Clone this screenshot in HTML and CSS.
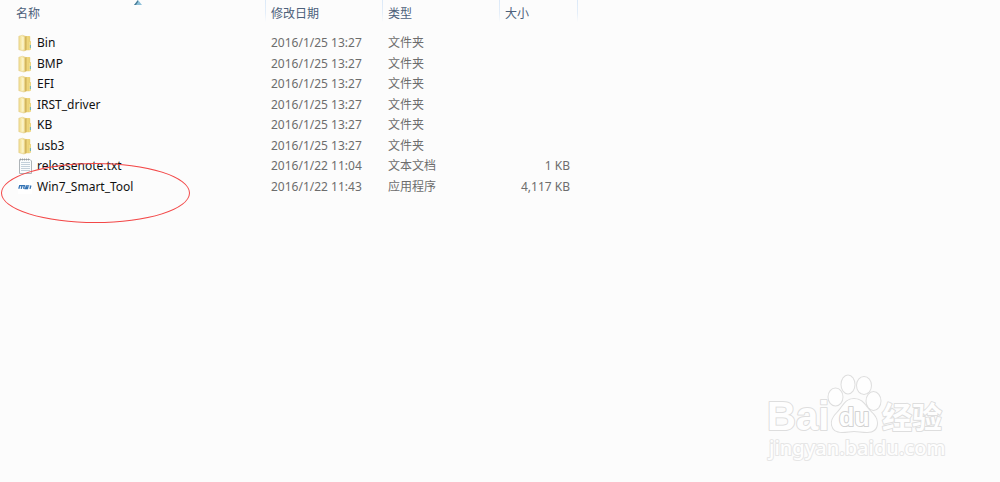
FILE: index.html
```html
<!DOCTYPE html>
<html lang="zh-CN">
<head>
<meta charset="utf-8">
<meta name="viewport" content="width=device-width, initial-scale=1">
<title>Win7_Smart_Tool</title>
<link rel="stylesheet" href="styles.css">
</head>
<body>
<svg class="defs" aria-hidden="true">
  <defs>
    <linearGradient id="front" x1="0" x2="1">
      <stop offset="0" stop-color="#eed98c"/><stop offset=".45" stop-color="#faf0b8"/><stop offset="1" stop-color="#e3c974"/>
    </linearGradient>
    <linearGradient id="back" x1="0" x2="1">
      <stop offset="0" stop-color="#c4a246"/><stop offset=".5" stop-color="#eed67c"/><stop offset="1" stop-color="#e6cb6c"/>
    </linearGradient>
    <symbol id="folder" viewBox="0 0 16 18">
      <path d="M6 2h5.500l.7.600V7l.8.600v7.600l-1.500 1H6z" fill="url(#back)"/>
      <path d="M11 8l1.600-.6v8L11 16z" fill="#f0dc8d"/>
      <path d="M12.400 11v3" stroke="#6fb2b5"/>
      <path d="M.8 2.200L4.600 1.200 7.800 2.400v14L5.800 17l-5-1.300z" fill="url(#front)" stroke="#e0c980" stroke-width=".5"/>
      <path d="M5 3v12.500" stroke="#fffbe0" stroke-width="1"/>
      <path d="M7.700 3v13" stroke="#c8a94e" stroke-width=".7"/>
    </symbol>
    <symbol id="note" viewBox="0 0 16 18">
      <path d="M1.500 2.500h10.500l1.500 1.500v12.500h-12z" fill="#fafcfd" stroke="#aeb4b8"/>
      <path d="M3 5.500h9M3 7.500h9M3 9.500h9M3 11.500h9M3 13.500h9" stroke="#c3d0da"/>
      <path d="M2.500 1.500v2M4.500 1.500v2M6.500 1.500v2M8.500 1.500v2M10.500 1.500v2" stroke="#92999d" stroke-width=".8"/>
    </symbol>
    <symbol id="msi" viewBox="0 0 16 18">
      <path d="M0 2h14v14H0z" fill="#fff"/>
      <path d="M.8 10.800l.9-3.200h4.700l-.9 3.200M4 7.800l-.8 3M6.500 10.600h3l.3-1.300H7.900l.4-1.500h3M12 10.900l.9-3.400" fill="none" stroke="#3474b5" stroke-width="1.300"/>
    </symbol>
  </defs>
</svg>
<main class="explorer">
  <table class="files">
    <colgroup><col class="col-name"><col class="col-date"><col class="col-type"><col class="col-size"></colgroup>
    <thead>
      <tr>
        <th aria-sort="ascending"><button type="button">名称</button><svg class="sort" viewBox="0 0 8 5" aria-hidden="true"><path d="M0 5l4-5 4 5z" fill="#8cc0d8"/><path d="M0 5l4-5v2L2 5z" fill="#4a7c96"/></svg></th>
        <th><button type="button">修改日期</button></th>
        <th><button type="button">类型</button></th>
        <th><button type="button">大小</button></th>
      </tr>
    </thead>
    <tbody>
      <tr><td><span class="file"><svg class="icon"><use href="#folder"/></svg>Bin</span></td><td>2016/1/25 13:27</td><td>文件夹</td><td></td></tr>
      <tr><td><span class="file"><svg class="icon"><use href="#folder"/></svg>BMP</span></td><td>2016/1/25 13:27</td><td>文件夹</td><td></td></tr>
      <tr><td><span class="file"><svg class="icon"><use href="#folder"/></svg>EFI</span></td><td>2016/1/25 13:27</td><td>文件夹</td><td></td></tr>
      <tr><td><span class="file"><svg class="icon"><use href="#folder"/></svg>IRST_driver</span></td><td>2016/1/25 13:27</td><td>文件夹</td><td></td></tr>
      <tr><td><span class="file"><svg class="icon"><use href="#folder"/></svg>KB</span></td><td>2016/1/25 13:27</td><td>文件夹</td><td></td></tr>
      <tr><td><span class="file"><svg class="icon"><use href="#folder"/></svg>usb3</span></td><td>2016/1/25 13:27</td><td>文件夹</td><td></td></tr>
      <tr><td><span class="file"><svg class="icon"><use href="#note"/></svg>releasenote.txt</span></td><td>2016/1/22 11:04</td><td>文本文档</td><td>1 KB</td></tr>
      <tr><td><span class="file"><svg class="icon"><use href="#msi"/></svg>Win7_Smart_Tool</span></td><td>2016/1/22 11:43</td><td>应用程序</td><td>4,117 KB</td></tr>
    </tbody>
  </table>
  <div class="highlight"></div>
  <svg class="watermark" viewBox="0 0 200 100" role="img" aria-label="Baidu 经验 jingyan.baidu.com">
    <g class="mark">
      <text class="bai" x="12" y="65">Bai</text>
      <ellipse cx="80.500" cy="32" rx="7" ry="8.500"/>
      <ellipse cx="93" cy="19.500" rx="6.500" ry="9"/>
      <ellipse cx="109" cy="20.500" rx="7" ry="8.500"/>
      <ellipse cx="118.500" cy="36" rx="7" ry="9"/>
      <path d="M99 34c-9 0-11 8-16 13-4 4-7 8-6 13 1 5 5 7 10 7 5 0 8-1 12-1s8 1 13 1c6 0 10-3 10-9 0-5-3-8-7-12-5-5-7-12-16-12z"/>
      <text class="du" x="84" y="61">du</text>
      <text class="jingyan" x="127" y="63">经验</text>
      <text class="url" x="14" y="90">jingyan.baidu.com</text>
    </g>
  </svg>
</main>
</body>
</html>
```
FILE: styles.css
```css
body {
  margin: 0;
  background: #fcfcfc;
  color: #6d6d6d;
  font: 12px/20px "Noto Sans", "Noto Sans CJK SC", sans-serif;
}

.defs {
  position: absolute;
  width: 0;
  height: 0;
}

.explorer {
  position: relative;
  min-height: 100vh;
}

.files {
  width: 578px;
  table-layout: fixed;
  border-collapse: collapse;
}

.col-name { width: 266px; }
.col-date { width: 117px; }
.col-type { width: 117px; }
.col-size { width: 78px; }

th {
  position: relative;
  height: 33px;
  padding: 0 0 0 5px;
  text-align: left;
  vertical-align: top;
  background: linear-gradient(#dbe9f8, #e4eef9 60%, #fcfcfc) right top / 1px 22px no-repeat;
}

th:first-child { padding-left: 16px; }

th button {
  display: block;
  padding: 4px 0 0;
  border: 0;
  background: none;
  color: #4c607a;
  font: inherit;
  font-weight: 400;
}

.sort {
  position: absolute;
  top: 0;
  left: 134px;
  width: 8px;
  height: 5px;
}

td {
  height: 20px;
  padding: 0 0 0 5px;
  white-space: nowrap;
}

tr:nth-child(even) td { height: 21px; }

td:first-child {
  padding-left: 18px;
  color: #111;
}

td:last-child {
  padding: 0 8px 0 0;
  text-align: right;
}

.file {
  display: flex;
  align-items: center;
  gap: 3px;
}

.icon {
  width: 16px;
  height: 18px;
}

.highlight {
  position: absolute;
  top: 163px;
  left: 1px;
  box-sizing: border-box;
  width: 189px;
  height: 60px;
  border: 1px solid #f34848;
  border-radius: 50%;
}

.watermark {
  position: absolute;
  right: 45px;
  bottom: 17px;
  width: 200px;
  height: 100px;
}

.mark {
  fill: #fefefe;
  stroke: #dedede;
  stroke-width: 2px;
  stroke-linejoin: round;
  paint-order: stroke;
}

.bai {
  font: bold 40px "Liberation Sans", sans-serif;
}

.du {
  stroke: #d2d2d2;
  font: bold 25px "Liberation Sans", sans-serif;
}

.jingyan {
  font: bold 30px "Noto Sans CJK SC", sans-serif;
}

.url {
  stroke: #e6e6e6;
  font: 500 20px "Noto Sans", sans-serif;
}
```
